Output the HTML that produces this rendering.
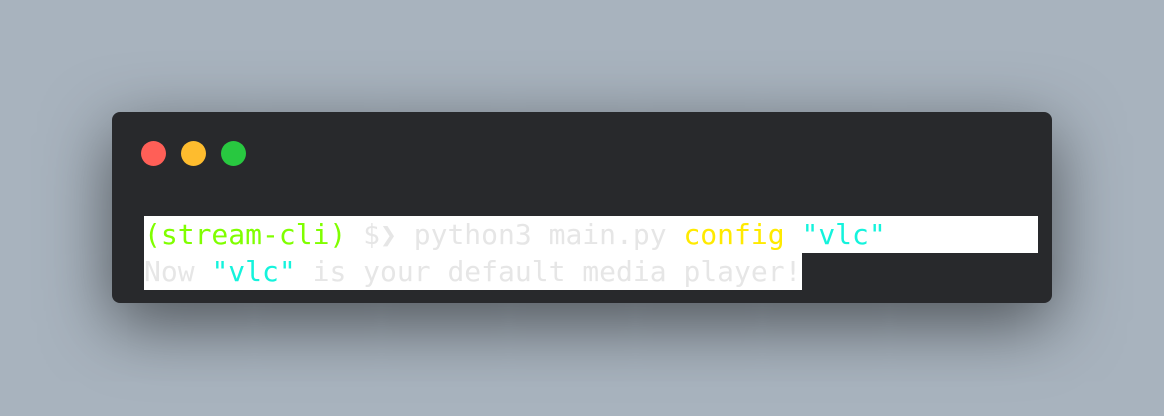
<!DOCTYPE html>
<html><head><style>
html,body{margin:0;padding:0;}
body{width:1164px;height:416px;background:#a8b3be;position:relative;overflow:hidden;}
.win{position:absolute;left:112px;top:112px;width:940px;height:191px;background:#28292c;border-radius:8px;
box-shadow:0 20px 68px rgba(0,0,0,0.55);}
.dot{position:absolute;top:29px;width:25px;height:25px;border-radius:50%;}
.code{position:absolute;left:32px;top:104px;font-family:"DejaVu Sans Mono","Liberation Mono",monospace;font-size:28px;line-height:37px;color:#e6e6e6;white-space:pre;}
.l{background:#fff;display:block;height:37px;}
.g{color:#80ff00}.y{color:#ffea00}.c{color:#14f3dc}
</style></head><body>
<div class="win">
<div class="dot" style="left:29px;background:#ff5f57;border:0"></div>
<div class="dot" style="left:69px;background:#febc2e"></div>
<div class="dot" style="left:109px;background:#28c840"></div>
<div class="code"><span class="l" style="width:894px"><span class="g">(stream-cli)</span> $❯ python3 main.py <span class="y">config</span> <span class="c">"vlc"</span></span><span class="l" style="width:658px">Now <span class="c">"vlc"</span> is your default media player!</span></div>
</div>
</body></html>
